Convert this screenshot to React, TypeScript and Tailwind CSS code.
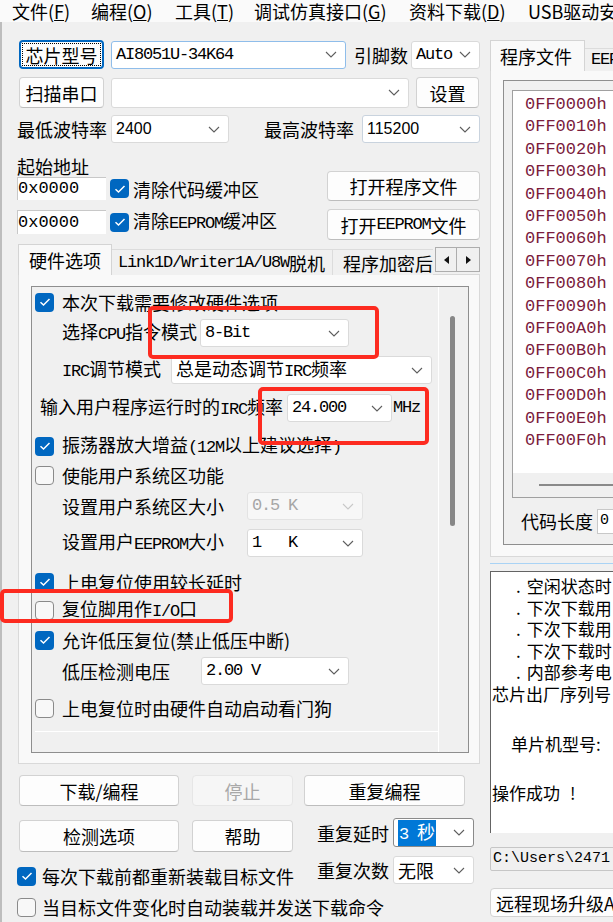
import React from 'react';

type Kids = { children?: React.ReactNode; className?: string };

// latin runs inside chinese labels use a fixed-width face
const M = ({ children, className = '' }: Kids) => (
  <span className={`font-['Liberation_Mono',monospace] text-[17px] tracking-[-1.2px] ${className}`}>{children}</span>
);

const Chevron = ({ light }: { light?: boolean }) => (
  <svg width="12" height="7" viewBox="0 0 12 7" className="shrink-0">
    <path d="M1 1 L6 6 L11 1" fill="none" stroke={light ? '#c8c8c8' : '#5f5f5f'} strokeWidth="1.1" />
  </svg>
);

const Combo = ({ children, className = '', disabled }: Kids & { disabled?: boolean }) => (
  <div
    className={`flex shrink-0 items-center justify-between overflow-hidden rounded-[3px] border pl-[4px] pr-[8px] whitespace-pre ${
      disabled ? 'border-[#e3e3e3] bg-[#f7f7f7] text-[#a6a6a6]' : 'bg-white'
    } ${className}`}
  >
    <div className="flex items-center">{children}</div>
    <Chevron light={disabled} />
  </div>
);

const Btn = ({ children, className = '', disabled }: Kids & { disabled?: boolean }) => (
  <div
    className={`flex shrink-0 items-center justify-center rounded-[4px] border text-[18px] leading-[22px] ${
      disabled
        ? 'border-[#e6e6e6] bg-[#f6f6f6] text-[#a8a8a8]'
        : 'border-[#d2d2d2] border-b-[#bdbdbd] bg-[#fdfdfd] text-black'
    } ${className}`}
  >
    {children}
  </div>
);

const Check = ({ on }: { on?: boolean }) =>
  on ? (
    <span className="flex h-[19px] w-[19px] shrink-0 items-center justify-center rounded-[4px] bg-[#0067c0]">
      <svg width="12" height="10" viewBox="0 0 12 10">
        <path d="M1.5 5.2 L4.5 8 L10.5 2" fill="none" stroke="white" strokeWidth="1.5" />
      </svg>
    </span>
  ) : (
    <span className="h-[19px] w-[19px] shrink-0 rounded-[4px] border border-[#8a8a8a] bg-[#f8f8f8]" />
  );

const CheckRow = ({ on, children, className = '' }: Kids & { on?: boolean }) => (
  <div className={`flex h-[28px] items-center ${className}`}>
    <Check on={on} />
    <span className="ml-[8px] whitespace-nowrap">{children}</span>
  </div>
);

const hexRows = [
  '0FF0000h', '0FF0010h', '0FF0020h', '0FF0030h', '0FF0040h', '0FF0050h', '0FF0060h', '0FF0070h',
  '0FF0080h', '0FF0090h', '0FF00A0h', '0FF00B0h', '0FF00C0h', '0FF00D0h', '0FF00E0h', '0FF00F0h',
];

const LeftPanel = () => (
  <div className="flex w-[487px] shrink-0 flex-col border-l-2 border-[#bdbdbd] pl-[15px]">
    {/* chip / pins */}
    <div className="mt-[18px] flex h-[29px] items-center">
      <div className="ml-[2px] flex h-[29px] w-[85px] shrink-0 rounded-[4px] border-2 border-[#0067c0] bg-[#fdfdfd] p-[1px]">
        <span className="flex flex-1 items-center justify-center border border-dotted border-black text-[18px] leading-[22px]">
          芯片型号
        </span>
      </div>
      <Combo className="ml-[7px] h-[28px] w-[235px] border-[#8fbdea]">
        <M>AI8051U-34K64</M>
      </Combo>
      <span className="ml-[8px] w-[54px] shrink-0">引脚数</span>
      <Combo className="ml-[3px] h-[28px] w-[69px] border-[#dadada]">
        <M>Auto</M>
      </Combo>
    </div>

    <div className="mt-[8px] flex h-[31px] items-center">
      <Btn className="ml-[2px] h-[31px] w-[85px]">扫描串口</Btn>
      <Combo className="ml-[7px] h-[30px] w-[298px] border-[#dadada]" />
      <Btn className="ml-[7px] h-[31px] w-[63px]">设置</Btn>
    </div>

    <div className="mt-[7px] flex h-[28px] items-center">
      <span className="w-[94px] shrink-0">最低波特率</span>
      <Combo className="h-[28px] w-[118px] border-[#dadada]">
        <span className="font-['Liberation_Sans',sans-serif] text-[16px]">2400</span>
      </Combo>
      <span className="ml-[35px] w-[98px] shrink-0">最高波特率</span>
      <Combo className="h-[28px] w-[118px] border-[#c9d3de]">
        <span className="font-['Liberation_Sans',sans-serif] text-[16px]">115200</span>
      </Combo>
    </div>

    {/* start address */}
    <div className="mt-[13px] flex">
      <div className="flex w-[310px] shrink-0 flex-col">
        <div className="h-[21px] leading-[21px]">起始地址</div>
        <div className="flex h-[23px] items-center">
          <div className="flex h-[23px] w-[89px] items-center border-l border-t border-[#c8c8c8] bg-white font-['Liberation_Mono',monospace] text-[17px]">
            0x0000
          </div>
          <span className="ml-[4px]">
            <Check on />
          </span>
          <span className="ml-[4px]">清除代码缓冲区</span>
        </div>
        <div className="mt-[10px] flex h-[24px] items-center">
          <div className="flex h-[24px] w-[89px] items-center border-l border-t border-[#c8c8c8] bg-white font-['Liberation_Mono',monospace] text-[17px]">
            0x0000
          </div>
          <span className="ml-[4px]">
            <Check on />
          </span>
          <span className="ml-[4px]">
            清除<M>EEPROM</M>缓冲区
          </span>
        </div>
      </div>
      <div className="mt-[15px] flex flex-col">
        <Btn className="h-[30px] w-[153px]">打开程序文件</Btn>
        <Btn className="mt-[8px] h-[31px] w-[153px]">
          打开<M>EEPROM</M>文件
        </Btn>
      </div>
    </div>

    {/* tabs */}
    <div className="relative z-10 -mb-px mt-[4px] ml-[1px] flex h-[31px] items-end">
      <div className="flex h-[31px] w-[94px] shrink-0 items-center border border-b-0 border-[#d4d4d4] bg-[#f9f9f9] pl-[10px]">
        硬件选项
      </div>
      <div className="flex h-[26px] w-[221px] shrink-0 items-center border-t border-r border-[#dcdcdc] bg-[#f0f0f0] pl-[6px] whitespace-nowrap">
        <M>Link1D/Writer1A/U8W</M>脱机
      </div>
      <div className="flex h-[26px] w-[100px] shrink-0 items-center overflow-hidden border-t border-[#dcdcdc] bg-[#f0f0f0] pl-[10px] whitespace-nowrap">
        程序加密后传输
      </div>
      <div className="mb-[3px] ml-[2px] flex self-end">
        <div className="flex h-[25px] w-[22px] items-center justify-center border border-[#adadad] bg-[#f0f0f0]">
          <svg width="5" height="8" viewBox="0 0 5 8">
            <path d="M5 0 L0 4 L5 8 Z" fill="#111" />
          </svg>
        </div>
        <div className="flex h-[25px] w-[23px] items-center justify-center border border-l-0 border-[#adadad] bg-[#f0f0f0]">
          <svg width="5" height="8" viewBox="0 0 5 8">
            <path d="M0 0 L5 4 L0 8 Z" fill="#111" />
          </svg>
        </div>
      </div>
    </div>

    <div className="ml-[1px] h-[490px] w-[462px] border border-[#d9d9d9] bg-[#f9f9f9]">
      <div className="ml-[12px] mt-[11px] flex h-[467px] w-[438px] border border-[#8e8e8e] bg-[#f0f0f0]">
        <div className="flex w-[406px] flex-col pl-[3px]">
          <CheckRow on className="mt-[1px]">
            本次下载需要修改硬件选项
          </CheckRow>
          <div className="mt-[3px] flex h-[28px] items-center pl-[27px]">
            <span className="w-[138px] shrink-0 whitespace-nowrap">
              选择<M>CPU</M>指令模式
            </span>
            <Combo className="h-[28px] w-[149px] border-[#dadada]">
              <M>8-Bit</M>
            </Combo>
          </div>
          <div className="mt-[9px] flex h-[28px] items-center pl-[27px]">
            <span className="w-[109px] shrink-0 whitespace-nowrap">
              <M>IRC</M>调节模式
            </span>
            <Combo className="h-[28px] w-[261px] border-[#dadada]">
              <span>
                总是动态调节<M>IRC</M>频率
              </span>
            </Combo>
          </div>
          <div className="mt-[10px] flex h-[28px] items-center pl-[5px]">
            <span className="w-[247px] shrink-0 whitespace-nowrap">
              输入用户程序运行时的<M>IRC</M>频率
            </span>
            <Combo className="h-[28px] w-[105px] border-[#dadada]">
              <M>24.000</M>
            </Combo>
            <M className="ml-[1px]">MHz</M>
          </div>
          <CheckRow on className="mt-[10px]">
            振荡器放大增益<M>(12M</M>以上建议选择<M>)</M>
          </CheckRow>
          <CheckRow className="mt-[1px]">使能用户系统区功能</CheckRow>
          <div className="mt-[3px] flex h-[28px] items-center pl-[27px]">
            <span className="w-[185px] shrink-0">设置用户系统区大小</span>
            <Combo disabled className="h-[28px] w-[116px]">
              <M>0.5 K</M>
            </Combo>
          </div>
          <div className="mt-[9px] flex h-[28px] items-center pl-[27px]">
            <span className="w-[185px] shrink-0 whitespace-nowrap">
              设置用户<M>EEPROM</M>大小
            </span>
            <Combo className="h-[28px] w-[116px] border-[#dadada]">
              <M>1   K</M>
            </Combo>
          </div>
          <CheckRow on className="mt-[11px]">
            上电复位使用较长延时
          </CheckRow>
          <CheckRow className="mt-0">
            复位脚用作<M>I/O</M>口
          </CheckRow>
          <CheckRow on className="mt-[2px]">
            允许低压复位(禁止低压中断)
          </CheckRow>
          <div className="mt-[3px] flex h-[28px] items-center pl-[27px]">
            <span className="w-[139px] shrink-0">低压检测电压</span>
            <Combo className="h-[28px] w-[148px] border-[#dadada]">
              <M>2.00 V</M>
            </Combo>
          </div>
          <CheckRow className="mt-[9px]">上电复位时由硬件自动启动看门狗</CheckRow>
          <div className="mt-[9px] h-px border-b border-white bg-[#a3a3a3]" />
        </div>
        <div className="flex w-[30px] flex-col border-l border-white">
          <div className="ml-[11px] mt-[29px] h-[210px] w-[5px] rounded-full bg-[#878787]" />
        </div>
      </div>
    </div>

    {/* bottom controls */}
    <div className="mt-[11px] flex h-[31px]">
      <Btn className="ml-[2px] h-[31px] w-[160px]">下载/编程</Btn>
      <Btn disabled className="ml-[13px] h-[31px] w-[101px]">
        停止
      </Btn>
      <Btn className="ml-[11px] h-[31px] w-[161px]">重复编程</Btn>
    </div>
    <div className="mt-[12px] flex h-[34px] items-start">
      <Btn className="ml-[2px] mt-[2px] h-[32px] w-[160px]">检测选项</Btn>
      <Btn className="ml-[13px] mt-[2px] h-[32px] w-[101px]">帮助</Btn>
      <span className="ml-[24px] flex h-[29px] w-[76px] shrink-0 items-center">重复延时</span>
      <Combo className="h-[29px] w-[81px] border-[#8a8a8a] pl-[2px]">
        <span className="bg-[#0078d7] px-[1px] text-white">
          <M>3 </M>秒
        </span>
      </Combo>
    </div>
    <div className="mt-[4px] flex h-[30px]">
      <div className="flex h-[20px] w-[300px] shrink-0 items-center self-end">
        <Check on />
        <span className="ml-[6px] whitespace-nowrap">每次下载前都重新装载目标文件</span>
      </div>
      <span className="flex h-[28px] w-[76px] shrink-0 items-center">重复次数</span>
      <Combo className="h-[28px] w-[81px] border-[#dadada] pl-[2px]">无限</Combo>
    </div>
    <div className="mt-[11px] flex h-[20px] items-center">
      <Check />
      <span className="ml-[6px] whitespace-nowrap">当目标文件变化时自动装载并发送下载命令</span>
    </div>
  </div>
);

const RightPanel = () => (
  <div className="w-[126px] shrink-0 overflow-hidden">
    <div className="relative z-10 -mb-px ml-[3px] mt-[18px] flex h-[31px] w-[300px] items-end">
      <div className="flex h-[31px] w-[95px] shrink-0 items-center border border-b-0 border-[#d4d4d4] bg-[#f9f9f9] pl-[9px]">
        程序文件
      </div>
      <div className="flex h-[23px] w-[130px] shrink-0 items-center border-t border-r border-[#dcdcdc] bg-[#f0f0f0] pl-[6px] whitespace-nowrap">
        <M>EEPROM</M>文件
      </div>
    </div>
    <div className="ml-[3px] h-[487px] w-[260px] border border-[#d9d9d9] bg-[#f9f9f9]">
      <div className="ml-[12px] mt-[9px] flex h-[465px] w-[220px] flex-col border border-[#8e8e8e] bg-[#f0f0f0]">
        <div className="ml-[8px] mt-[9px] flex h-[408px] flex-col border-y border-l border-[#a0a0a0]">
          <div className="h-[382px] bg-white pl-[12px] pt-[3px] font-['Liberation_Mono',monospace] text-[17px] leading-[22.4px] text-[#7a1b3c]">
            {hexRows.map((r) => (
              <div key={r}>{r}</div>
            ))}
          </div>
          <div className="flex h-[24px] items-center pl-[26px]">
            <div className="h-[2px] w-[200px] bg-[#8a8a8a]" />
          </div>
        </div>
        <div className="mt-[10px] flex h-[26px] items-center pl-[17px]">
          <span className="w-[76px] shrink-0">代码长度</span>
          <div className="flex h-[25px] w-[80px] items-center border border-[#c8c8c8] bg-white pl-[2px] font-['Liberation_Mono',monospace] text-[15px]">
            0
          </div>
        </div>
      </div>
    </div>
    <div className="ml-[3px] mt-[6px] h-px w-[260px] bg-[#a9d3f5]" />
    <div className="ml-[3px] mt-[7px] h-[262px] w-[260px] border-l border-t border-[#646464] bg-white pt-[3px] text-[17px] leading-[21.6px] whitespace-nowrap">
      {['空闲状态时', '下次下载用', '下次下载用', '下次下载时', '内部参考电'].map((t, i) => (
        <div key={i} className="pl-[25px]">
          .<span className="ml-[6px]">{t}</span>
        </div>
      ))}
      <div className="pl-[1px]">芯片出厂序列号</div>
      <div className="h-[28.4px]" />
      <div className="pl-[20px]">单片机型号:</div>
      <div className="h-[27.4px]" />
      <div className="pl-[1px]">
        操作成功<span className="ml-[10px]">!</span>
      </div>
    </div>
    <div className="ml-[3px] mt-[14px] flex h-[24px] w-[260px] items-center rounded-[2px] border border-[#c6c6c6] bg-[#f0f0f0] pl-[2px] font-['Liberation_Mono',monospace] text-[15px]">
      C:\Users\2471
    </div>
    <div className="ml-[3px] mt-[17px] flex h-[29px] w-[260px] items-center rounded-[4px] border border-[#d2d2d2] bg-[#fdfdfd] pl-[5px] whitespace-nowrap">
      远程现场升级A
    </div>
  </div>
);

export default function App() {
  return (
    <div className="relative h-[922px] w-[613px] overflow-hidden bg-[#f0f0f0] font-['Noto_Sans_CJK_SC',sans-serif] text-[18px] leading-[22px] text-black">
      {/* menu bar */}
      <div className="flex h-[22px] items-center bg-[#fafafa] pl-[12px] leading-[20px] whitespace-nowrap">
        <span className="w-[79px] shrink-0">
          文件(<u>F</u>)
        </span>
        <span className="w-[84px] shrink-0">
          编程(<u>O</u>)
        </span>
        <span className="w-[79px] shrink-0">
          工具(<u>T</u>)
        </span>
        <span className="w-[155px] shrink-0">
          调试仿真接口(<u>G</u>)
        </span>
        <span className="w-[119px] shrink-0">
          资料下载(<u>D</u>)
        </span>
        <span className="shrink-0">USB驱动安装</span>
      </div>

      <div className="flex h-[900px]">
        <LeftPanel />
        <RightPanel />
      </div>

      {/* red annotation boxes drawn over the window */}
      <div className="pointer-events-none absolute left-[148px] top-[306px] h-[53px] w-[231px] rounded-[5px] border-4 border-[#fd2b20]" />
      <div className="pointer-events-none absolute left-[258px] top-[387px] h-[58px] w-[171px] rounded-[5px] border-4 border-[#fd2b20]" />
      <div className="pointer-events-none absolute left-0 top-[589px] h-[34px] w-[233px] rounded-[5px] border-4 border-[#fd2b20]" />
    </div>
  );
}
